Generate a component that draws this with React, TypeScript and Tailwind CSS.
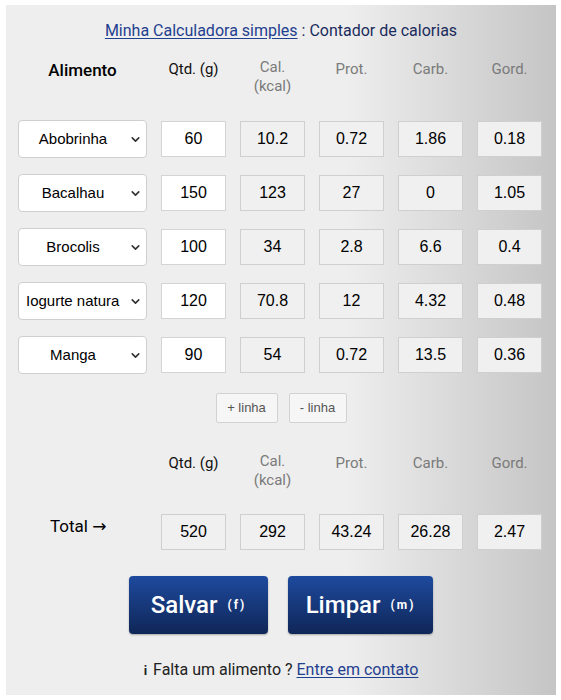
import { ChevronDown } from 'lucide-react';

const rows = [
  { food: 'Abobrinha', qty: '60', cal: '10.2', prot: '0.72', carb: '1.86', gord: '0.18' },
  { food: 'Bacalhau', qty: '150', cal: '123', prot: '27', carb: '0', gord: '1.05' },
  { food: 'Brocolis', qty: '100', cal: '34', prot: '2.8', carb: '6.6', gord: '0.4' },
  { food: 'Iogurte natural', qty: '120', cal: '70.8', prot: '12', carb: '4.32', gord: '0.48' },
  { food: 'Manga', qty: '90', cal: '54', prot: '0.72', carb: '13.5', gord: '0.36' },
];

const cond = "font-['Roboto','DejaVu_Sans',sans-serif]";
const arial = "font-['Liberation_Sans',Arial,sans-serif]";

function Box({ value, white }: { value: string; white?: boolean }) {
  return (
    <div
      className={`h-[36px] w-[65px] flex items-center justify-center border text-[16px] text-black ${arial} ${
        white ? 'bg-white border-[#d4d4d4]' : 'bg-[#f0f0f0] border-[#cfcfcf]'
      }`}
    >
      {value}
    </div>
  );
}

function Headers() {
  return (
    <>
      <div className={`text-center text-[15px] text-[#111] ${cond}`}>Qtd. (g)</div>
      <div className={`text-center text-[15px] leading-[19px] text-[#7a7a7a] ${cond}`}>
        Cal.
        <br />
        (kcal)
      </div>
      <div className={`text-center text-[15px] text-[#7a7a7a] ${cond}`}>Prot.</div>
      <div className={`text-center text-[15px] text-[#7a7a7a] ${cond}`}>Carb.</div>
      <div className={`text-center text-[15px] text-[#7a7a7a] ${cond}`}>Gord.</div>
    </>
  );
}

export default function App() {
  return (
    <div className="w-[561px] h-[700px] bg-white pt-[5px] pl-[6px]">
      <div className="w-[550px] h-[690px] bg-[linear-gradient(to_right,#eeeeee_62%,#c5c5c5)] pl-[12px] pt-[14px]">
        <div className={`text-center text-[16px] pr-[12px] text-[#1b2c5c] ${cond}`}>
          <a className="text-[#1f3f8f] underline underline-offset-2">Minha Calculadora simples</a> : Contador de
          calorias
        </div>

        <div className="mt-[15px] grid grid-cols-[129px_repeat(5,65px)] gap-x-[14px] items-start">
          <div className={`text-center text-[17px] font-medium text-black ${cond}`}>Alimento</div>
          <Headers />
        </div>

        <div className="mt-[24px] flex flex-col gap-[16px]">
          {rows.map((r) => (
            <div key={r.food} className="grid grid-cols-[129px_repeat(5,65px)] gap-x-[14px] items-center">
              <div className="relative h-[38px]">
                <select
                  defaultValue={r.food}
                  className={`appearance-none w-full h-full bg-white border border-[#cfcfcf] rounded-[4px] pl-[7px] pr-[26px] text-[15px] text-black [text-align-last:center] ${arial}`}
                >
                  <option>{r.food}</option>
                </select>
                <ChevronDown
                  size={13}
                  strokeWidth={3}
                  className="absolute right-[5px] top-[13px] text-[#333] pointer-events-none"
                />
              </div>
              <Box value={r.qty} white />
              <Box value={r.cal} />
              <Box value={r.prot} />
              <Box value={r.carb} />
              <Box value={r.gord} />
            </div>
          ))}
        </div>

        <div className={`mt-[19px] flex justify-center gap-[11px] pr-[12px] ${arial}`}>
          <button className="h-[30px] w-[62px] bg-[#f6f6f6] border border-[#d2d2d2] rounded-[2px] text-[13px] text-[#555]">
            + linha
          </button>
          <button className="h-[30px] w-[58px] bg-[#f6f6f6] border border-[#d2d2d2] rounded-[2px] text-[13px] text-[#555]">
            - linha
          </button>
        </div>

        <div className="mt-[29px] grid grid-cols-[129px_repeat(5,65px)] gap-x-[14px] items-start">
          <div />
          <Headers />
        </div>

        <div className="mt-[24px] grid grid-cols-[129px_repeat(5,65px)] gap-x-[14px] items-center">
          <div className={`text-[17px] text-black pl-[32px] mb-[10px] ${cond}`}>Total →</div>
          <Box value="520" />
          <Box value="292" />
          <Box value="43.24" />
          <Box value="26.28" />
          <Box value="2.47" />
        </div>

        <div className={`mt-[26px] flex justify-center gap-[20px] pr-[12px] ${cond}`}>
          <button className="h-[58px] w-[139px] rounded-[4px] bg-[linear-gradient(to_bottom,#1e4a9e,#0f2657)] text-white shadow-[0_1px_2px_rgba(0,0,0,0.3)] flex items-center justify-center gap-[10px]">
            <span className="text-[24px] font-medium">Salvar</span>
            <span className="text-[12px] font-bold tracking-[2px]">(f)</span>
          </button>
          <button className="h-[58px] w-[145px] rounded-[4px] bg-[linear-gradient(to_bottom,#1e4a9e,#0f2657)] text-white shadow-[0_1px_2px_rgba(0,0,0,0.3)] flex items-center justify-center gap-[10px]">
            <span className="text-[24px] font-medium">Limpar</span>
            <span className="text-[12px] font-bold tracking-[2px]">(m)</span>
          </button>
        </div>

        <div className={`mt-[24px] text-center text-[16px] text-[#222] pr-[12px] ${cond}`}>
          <span className="text-[13px] font-bold mr-[6px]">i</span>Falta um alimento ?{' '}
          <a className="text-[#1f3f8f] underline underline-offset-2">Entre em contato</a>
        </div>
      </div>
    </div>
  );
}
